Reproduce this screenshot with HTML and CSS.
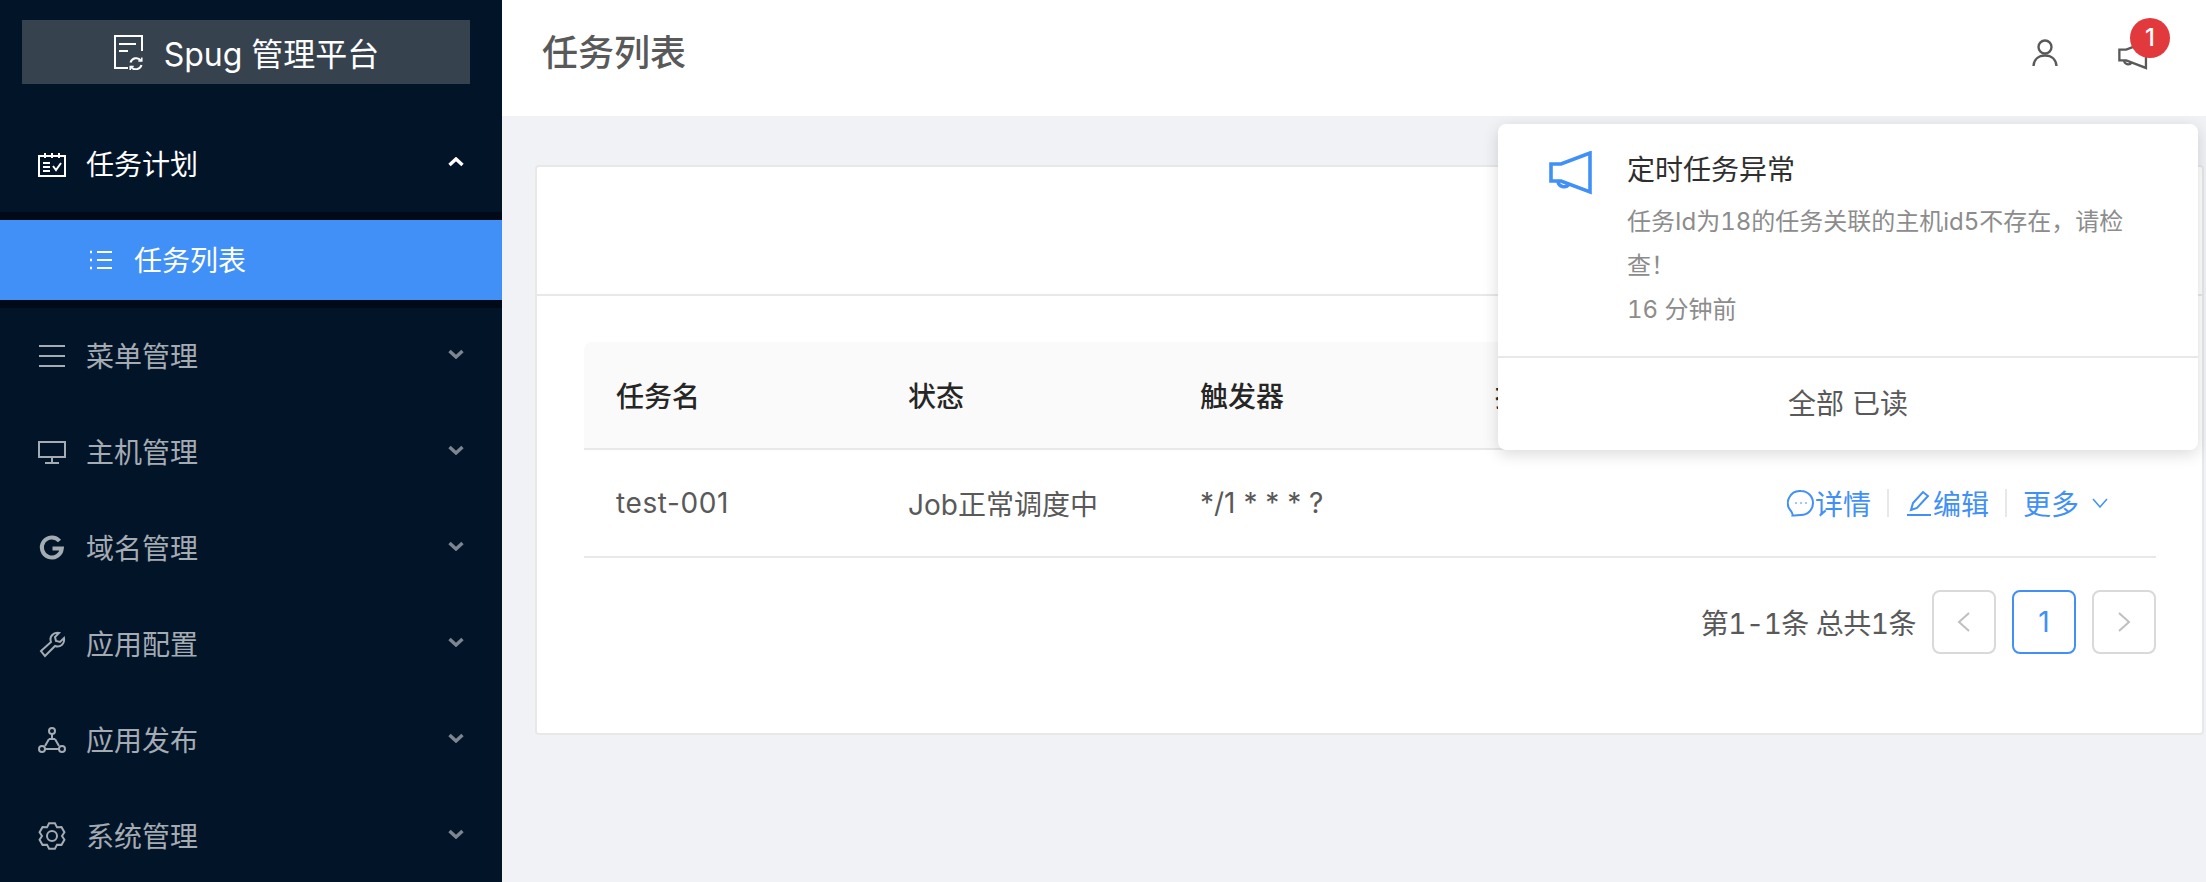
FILE: index.html
```html
<!DOCTYPE html>
<html lang="zh-CN">
<head>
    <meta charset="UTF-8">
    <title>Spug 管理平台</title>
    <link rel="stylesheet" href="styles.css">
</head>
<body>
    <div class="app">
        <aside class="sidebar">
            <div class="logo">
                <svg class="logo-icon" viewBox="0 0 32 36"><path d="M15 34H2V2H29V17"/><path d="M6 10H23M6 17H15"/><path d="M17.5 28.5A6 6 0 0 1 28 26.5M28.5 31A6 6 0 0 1 18 33"/><path d="M28.8 23.5V27H25.3M17.2 36V32.5H20.7" class="thin"/></svg>
                <span>Spug 管理平台</span>
            </div>
            <nav class="menu">
                <div class="menu-item open">
                    <svg class="menu-icon" viewBox="0 0 28 28"><path d="M1 6H27V26H1Z"/><path d="M7 3V8M14 3V8M21 3V8M5 13H12M5 17H12M5 21H12M15 16L18 20L23 13"/></svg>
                    <span class="menu-label">任务计划</span>
                    <svg class="arrow" viewBox="0 0 16 10"><path d="M1.5 8L8 2L14.5 8"/></svg>
                </div>
                <div class="submenu">
                    <div class="submenu-item">
                        <svg class="sub-icon" viewBox="0 0 24 24"><path d="M8 4H23M8 12H23M8 20H23"/><path class="dots" d="M1 4H3M1 12H3M1 20H3"/></svg>
                        <span class="sub-label">任务列表</span>
                    </div>
                </div>
                <div class="menu-item">
                    <svg class="menu-icon" viewBox="0 0 28 28"><path d="M1 4H27M1 14H27M1 24H27"/></svg>
                    <span class="menu-label">菜单管理</span>
                    <svg class="arrow" viewBox="0 0 16 10"><path d="M1.5 2L8 8L14.5 2"/></svg>
                </div>
                <div class="menu-item">
                    <svg class="menu-icon" viewBox="0 0 28 28"><path d="M1 4H27V19H1Z"/><path d="M14 19V25M7 25H21"/></svg>
                    <span class="menu-label">主机管理</span>
                    <svg class="arrow" viewBox="0 0 16 10"><path d="M1.5 2L8 8L14.5 2"/></svg>
                </div>
                <div class="menu-item">
                    <svg class="menu-icon heavy" viewBox="0 0 28 28"><path d="M21.5 7A10 10 0 1 0 23.8 14.5H14.5"/></svg>
                    <span class="menu-label">域名管理</span>
                    <svg class="arrow" viewBox="0 0 16 10"><path d="M1.5 2L8 8L14.5 2"/></svg>
                </div>
                <div class="menu-item">
                    <svg class="menu-icon" viewBox="0 0 28 28"><path d="M3 21L13 12C11 7 15 2 21 3L17 7L18 11L22 12L26 8C27 14 22 18 17 16L7 26Z"/></svg>
                    <span class="menu-label">应用配置</span>
                    <svg class="arrow" viewBox="0 0 16 10"><path d="M1.5 2L8 8L14.5 2"/></svg>
                </div>
                <div class="menu-item">
                    <svg class="menu-icon" viewBox="0 0 28 28"><circle cx="14" cy="5" r="3"/><circle cx="4" cy="23" r="3"/><circle cx="24" cy="23" r="3"/><path d="M14 8V12M11 13L7 20M17 13L21 20M7 23H21M11 13H17"/></svg>
                    <span class="menu-label">应用发布</span>
                    <svg class="arrow" viewBox="0 0 16 10"><path d="M1.5 2L8 8L14.5 2"/></svg>
                </div>
                <div class="menu-item">
                    <svg class="menu-icon" viewBox="0 0 28 28"><path d="M11.07 1.33H16.93L19 5.34L23.5 5.13L26.43 10.2L24 14L26.43 17.8L23.5 22.87L19 22.66L16.93 26.67H11.07L9 22.66L4.5 22.87L1.57 17.8L4 14L1.57 10.2L4.5 5.13L9 5.34Z"/><circle cx="14" cy="14" r="5"/></svg>
                    <span class="menu-label">系统管理</span>
                    <svg class="arrow" viewBox="0 0 16 10"><path d="M1.5 2L8 8L14.5 2"/></svg>
                </div>
            </nav>
        </aside>

        <div class="main">
            <header class="header">
                <h1>任务列表</h1>
                <div class="header-actions">
                    <svg class="user-icon" viewBox="0 0 26 28"><circle cx="13" cy="8" r="6.5"/><path d="M1.5 27C2 20 7 16.5 13 16.5S24 20 24.5 27"/></svg>
                    <div class="notice">
                        <svg class="notice-icon" viewBox="0 0 44 44"><path d="M2 14H12L41 3V41L12 30H2Z"/><path d="M9 30A6 6 0 0 0 20 33"/></svg>
                        <span class="badge">1</span>
                    </div>
                </div>
            </header>

            <div class="content">
                <div class="card">
                    <div class="card-head"></div>
                    <div class="card-body">
                        <table>
                            <thead>
                                <tr>
                                    <th class="col">任务名</th>
                                    <th class="col">状态</th>
                                    <th class="col">触发器</th>
                                    <th class="col-desc">描述信息</th>
                                    <th></th>
                                </tr>
                            </thead>
                            <tbody>
                                <tr>
                                    <td class="task-name">test-001</td>
                                    <td>Job正常调度中</td>
                                    <td>*/1 * * * ?</td>
                                    <td></td>
                                    <td>
                                        <div class="actions">
                                            <a class="link">
                                                <svg class="link-icon" viewBox="0 0 28 28"><path d="M14 2A12 12 0 0 1 14 26C11 26 9 26.5 5.5 26.5C6 25 5 24 4 22A12 12 0 0 1 14 2Z"/><path d="M8.5 14H9.5M13.5 14H14.5M18.5 14H19.5"/></svg>详情</a>
                                            <span class="divider"></span>
                                            <a class="link">
                                                <svg class="link-icon" viewBox="0 0 28 28"><path d="M2 26H26M6 21L8 14L18 3L23 7L12 19Z"/></svg>编辑</a>
                                            <span class="divider"></span>
                                            <a class="link">更多<svg class="down-icon" viewBox="0 0 16 10"><path d="M1 1L8 9L15 1"/></svg></a>
                                        </div>
                                    </td>
                                </tr>
                            </tbody>
                        </table>
                        <div class="pagination">
                            <span class="total">第1-1条 总共1条</span>
                            <span class="page"><svg viewBox="0 0 14 22"><path d="M12 2L2 11L12 20"/></svg></span>
                            <span class="page active">1</span>
                            <span class="page"><svg viewBox="0 0 14 22"><path d="M2 2L12 11L2 20"/></svg></span>
                        </div>
                    </div>
                </div>
            </div>
        </div>

        <div class="popup">
            <div class="popup-item">
                <svg class="popup-icon" viewBox="0 0 44 44"><path d="M2 13H12L41 2V41L12 30H2Z"/><path d="M9 30A6 6 0 0 0 20 33"/></svg>
                <div class="popup-text">
                    <div class="popup-title">定时任务异常</div>
                    <div class="popup-desc">任务Id为18的任务关联的主机id5不存在，请检查！</div>
                    <div class="popup-desc">16 分钟前</div>
                </div>
            </div>
            <div class="popup-footer">全部 已读</div>
        </div>
    </div>
</body>
</html>
```

FILE: styles.css
```css
* {
    box-sizing: border-box;
}

body {
    margin: 0;
    font-family: 'Inter', 'Noto Sans CJK SC', sans-serif;
    font-size: 28px;
    color: #595959;
    background-color: #f0f2f5;
}

.app {
    position: relative;
    display: flex;
    height: 882px;
    overflow: hidden;
}

svg {
    fill: none;
    stroke: currentColor;
    stroke-width: 2;
    flex-shrink: 0;
}

/* Sidebar */
.sidebar {
    width: 502px;
    flex-shrink: 0;
    background-color: #021428;
    color: #a5abb3;
}

.logo {
    display: flex;
    align-items: center;
    justify-content: center;
    gap: 19px;
    height: 64px;
    margin: 20px 32px 40px 22px;
    background-color: #37424f;
    color: #fff;
    font-size: 32px;
}

.logo-icon {
    width: 32px;
    height: 36px;
}

.logo-icon .thin {
    stroke-width: 1.5;
}

.menu-item {
    display: flex;
    align-items: center;
    height: 80px;
    margin-bottom: 16px;
    padding: 0 38px;
}

.menu-item.open {
    margin-bottom: 8px;
    color: #fff;
}

.menu-icon {
    width: 28px;
    height: 28px;
}

.menu-icon.heavy {
    stroke-width: 4;
}

.menu-label {
    margin: -2px 0 0 20px;
    flex: 1;
}

.arrow {
    width: 16px;
    height: 10px;
    margin-top: -4px;
    stroke-width: 3.4;
    opacity: 0.75;
}

.menu-item.open .arrow {
    opacity: 1;
}

.submenu {
    margin-bottom: 8px;
    padding: 8px 0;
    background-color: #000b17;
}

.submenu-item {
    display: flex;
    align-items: center;
    height: 80px;
    padding-left: 89px;
    background-color: #4190f7;
    color: #fff;
}

.sub-icon {
    width: 24px;
    height: 24px;
    margin-right: 21px;
}

.sub-icon .dots {
    stroke-width: 2.4;
}

.sub-label {
    margin-top: -2px;
}

/* Header */
.main {
    flex: 1;
    min-width: 0;
}

.header {
    display: flex;
    align-items: center;
    justify-content: space-between;
    height: 116px;
    padding: 0 58px 16px 40px;
    background-color: #fff;
}

h1 {
    margin: 0;
    font-size: 36px;
    font-weight: 500;
    color: #595959;
}

.header-actions {
    display: flex;
    align-items: center;
    gap: 60px;
    margin-top: 16px;
}

.user-icon {
    width: 26px;
    height: 28px;
    margin-top: -10px;
    stroke-width: 2.4;
}

.notice {
    position: relative;
    width: 30px;
    height: 30px;
    margin-top: -6px;
}

.notice-icon {
    width: 30px;
    height: 30px;
    stroke-width: 3.4;
}

.badge {
    position: absolute;
    top: -22px;
    left: 12px;
    width: 40px;
    height: 40px;
    border-radius: 50%;
    background-color: #e23a3c;
    color: #fff;
    font-size: 24px;
    font-weight: 500;
    line-height: 40px;
    text-align: center;
}

/* Card and table */
.content {
    padding: 49px 2px 0 33px;
}

.card {
    height: 570px;
    background-color: #fff;
    border: 2px solid #e8e8e8;
    border-radius: 4px;
}

.card-head {
    height: 129px;
    border-bottom: 2px solid #e8e8e8;
}

.card-body {
    padding: 46px 46px 0 47px;
}

table {
    width: 100%;
    border-collapse: collapse;
    table-layout: fixed;
}

th, td {
    padding: 0 32px;
    text-align: left;
    border-bottom: 2px solid #e8e8e8;
    white-space: nowrap;
}

th {
    height: 107px;
    background-color: #fafafa;
    color: #262626;
    font-weight: 500;
}

th:first-child {
    border-top-left-radius: 8px;
}

td {
    height: 108px;
}

.task-name {
    letter-spacing: 0.6px;
}

.col {
    width: 292px;
}

.col-desc {
    width: 293px;
    padding-left: 35px;
}

.actions {
    display: flex;
    align-items: center;
    justify-content: flex-end;
    margin-right: 16px;
    color: #4190f7;
}

.link {
    display: flex;
    align-items: center;
}

.link-icon {
    width: 28px;
    height: 28px;
}

.down-icon {
    width: 16px;
    height: 10px;
    margin-left: 13px;
    stroke-width: 1.5;
}

.divider {
    width: 2px;
    height: 28px;
    margin: 0 16px;
    background-color: #e8e8e8;
}

.pagination {
    display: flex;
    align-items: center;
    justify-content: flex-end;
    gap: 16px;
    margin-top: 32px;
}

.total {
    font-variant-numeric: tabular-nums;
    letter-spacing: -0.5px;
}

.page {
    display: flex;
    align-items: center;
    justify-content: center;
    width: 64px;
    height: 64px;
    border: 2px solid #d9d9d9;
    border-radius: 8px;
    color: #bfbfbf;
}

.page svg {
    width: 14px;
    height: 22px;
}

.page.active {
    border-color: #4190f7;
    color: #4190f7;
}

/* Notification popup */
.popup {
    position: absolute;
    top: 124px;
    right: 8px;
    width: 700px;
    height: 326px;
    background-color: #fff;
    border-radius: 8px;
    box-shadow: 0 4px 16px rgba(0, 0, 0, 0.15);
}

.popup-item {
    display: flex;
    height: 234px;
    padding: 24px 66px 0 51px;
    border-bottom: 2px solid #e8e8e8;
}

.popup-icon {
    width: 44px;
    height: 44px;
    margin: 3px 34px 0 0;
    stroke-width: 3.6;
    color: #4190f7;
}

.popup-title {
    margin-bottom: 8px;
    line-height: 44px;
    color: #2f2f2f;
}

.popup-desc {
    font-size: 24px;
    line-height: 44px;
    font-variant-numeric: tabular-nums;
    color: #8c8c8c;
}

.popup-footer {
    height: 92px;
    line-height: 92px;
    text-align: center;
}
```
